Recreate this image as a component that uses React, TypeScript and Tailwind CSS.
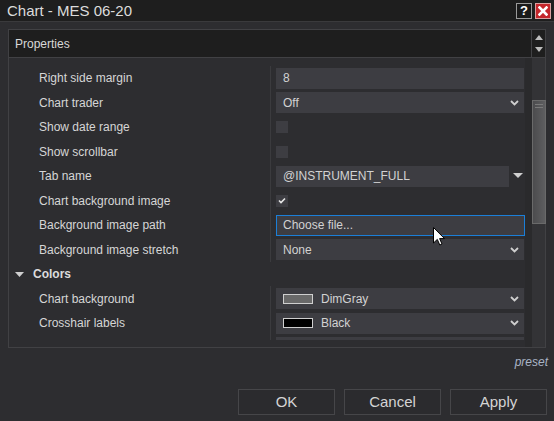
import React from "react";

const Chevron = () => (
  <svg width="9" height="6" viewBox="0 0 9 6" className="shrink-0">
    <polyline points="1,1 4.5,4.5 8,1" fill="none" stroke="#cfcfcf" strokeWidth="1.8" />
  </svg>
);

const Row = ({ label, children }: { label: string; children?: React.ReactNode }) => (
  <div className="h-[24.5px] shrink-0 flex">
    <div className="w-[262px] border-r border-[#3b3b3e] pl-[30px] flex items-center text-[12px] text-[#d6d6d6] whitespace-nowrap">
      {label}
    </div>
    <div className="flex-1 pl-[5px] flex items-center">{children}</div>
  </div>
);

const Box = ({ children, chevron }: { children?: React.ReactNode; chevron?: boolean }) => (
  <div className="w-[248px] h-[21px] bg-[#3d3d42] flex items-center pl-[7px] pr-[5px] text-[12px] text-[#d2d2d2]">
    <div className="flex-1 flex items-center">{children}</div>
    {chevron && <Chevron />}
  </div>
);

const Check = ({ checked }: { checked?: boolean }) => (
  <div className="w-[12px] h-[12px] bg-[#3d3d42] flex items-center justify-center">
    {checked && (
      <svg width="8" height="7" viewBox="0 0 8 7">
        <polyline points="1,3.5 3,5.5 7,1.5" fill="none" stroke="#e6e6e6" strokeWidth="1.6" />
      </svg>
    )}
  </div>
);

const Swatch = ({ color }: { color: string }) => (
  <div className="w-[30px] h-[10px] border border-[#cfcfcf] mr-[8px]" style={{ background: color }} />
);

export default function App() {
  return (
    <div className="w-[554px] h-[421px] bg-[#2d2d30] flex flex-col overflow-hidden font-['Liberation_Sans',Arial,sans-serif] text-[#d4d4d4] relative">
      {/* Title bar */}
      <div className="h-[22px] shrink-0 bg-[#1e1e1e] border-b border-[#3a3a3c] flex items-center pl-[7px] pr-[3px]">
        <span className="flex-1 text-[15px] text-[#dcdcdc] leading-none">Chart - MES 06-20</span>
        <div className="flex gap-[3px] items-center">
          <div className="w-[16px] h-[16px] bg-[#1a1a1a] border border-[#9a9a9a] flex items-center justify-center text-[13px] font-bold text-white leading-none">
            ?
          </div>
          <div className="w-[16px] h-[16px] bg-[#c4262b] border border-[#d8a0a0] flex items-center justify-center">
            <svg width="10" height="10" viewBox="0 0 10 10">
              <path d="M1.5 1.5 L8.5 8.5 M8.5 1.5 L1.5 8.5" stroke="white" strokeWidth="2.6" strokeLinecap="square" />
            </svg>
          </div>
        </div>
      </div>

      {/* Panel */}
      <div className="pl-[8px] pt-[7px] shrink-0">
        <div className="w-[538px] h-[319px] border border-[#414144] flex flex-col">
          {/* Header */}
          <div className="h-[28px] shrink-0 bg-[#1e1e1e] border-b border-[#414144] flex">
            <div className="flex-1 flex items-center pl-[6px] text-[12px] text-[#d8d8d8]">Properties</div>
            <div className="w-[14px] border-l border-[#414144] flex flex-col items-center justify-between py-[5px]">
              <svg width="8" height="5" viewBox="0 0 8 5"><polygon points="0,5 8,5 4,0" fill="#bdbdbd" /></svg>
              <svg width="8" height="5" viewBox="0 0 8 5"><polygon points="0,0 8,0 4,5" fill="#bdbdbd" /></svg>
            </div>
          </div>
          {/* Content */}
          <div className="flex-1 flex min-h-0">
            <div className="flex-1 flex flex-col pt-[5px] pb-[7px]">
              <div className="h-[277px] shrink-0 overflow-hidden flex flex-col pt-[2.75px]">
                <Row label="Right side margin"><Box>8</Box></Row>
                <Row label="Chart trader"><Box chevron>Off</Box></Row>
                <Row label="Show date range"><Check /></Row>
                <Row label="Show scrollbar"><Check /></Row>
                <Row label="Tab name">
                  <div className="w-[233px] h-[21px] bg-[#3d3d42] flex items-center pl-[7px] text-[12px] text-[#d2d2d2]">
                    @INSTRUMENT_FULL
                  </div>
                  <svg width="10" height="6" viewBox="0 0 10 6" className="ml-[4px]">
                    <polygon points="0,0 10,0 5,5" fill="#cfcfcf" />
                  </svg>
                </Row>
                <Row label="Chart background image"><Check checked /></Row>
                <Row label="Background image path">
                  <div className="w-[249px] h-[21px] bg-[#3d3d42] border border-[#1b7fd8] flex items-center pl-[6px] text-[12px] text-[#d2d2d2]">
                    Choose file...
                  </div>
                </Row>
                <Row label="Background image stretch"><Box chevron>None</Box></Row>
                <div className="h-[24.5px] shrink-0 flex items-center pl-[6px]">
                  <svg width="9" height="5" viewBox="0 0 9 5" className="mr-[9px]">
                    <polygon points="0,0 9,0 4.5,5" fill="#cfcfcf" />
                  </svg>
                  <span className="text-[12px] font-bold text-[#dcdcdc]">Colors</span>
                </div>
                <Row label="Chart background"><Box chevron><Swatch color="#696969" />DimGray</Box></Row>
                <Row label="Crosshair labels"><Box chevron><Swatch color="#000000" />Black</Box></Row>
                <Row label=""><Box /></Row>
              </div>
            </div>
            <div className="w-[7px] bg-[#2a2a2c]" />
            <div className="w-[14px] bg-[#333336] relative">
              <div className="absolute left-0 top-[42px] w-[14px] h-[124px] border border-[#6a6a6a] bg-gradient-to-r from-[#4c4c4e] to-[#5e5e60] flex flex-col items-center pt-[3px] gap-[2px]">
                <div className="w-[8px] h-px bg-[#7a7a7a]" />
                <div className="w-[8px] h-px bg-[#7a7a7a]" />
              </div>
            </div>
          </div>
        </div>
      </div>

      {/* preset */}
      <div className="h-[28px] shrink-0 flex items-center justify-end pr-[6px]">
        <span className="italic text-[12px] text-[#a9b4c6]">preset</span>
      </div>

      {/* Buttons */}
      <div className="mt-[13px] shrink-0 flex justify-end gap-[9px] pr-[7px]">
        {["OK", "Cancel", "Apply"].map((t) => (
          <div key={t} className="w-[97px] h-[26px] bg-[#2b2b2e] border border-[#464649] flex items-center justify-center text-[15px] text-[#d4d4d4]">
            {t}
          </div>
        ))}
      </div>

      {/* Mouse cursor */}
      <svg width="12" height="19" viewBox="0 0 12 19" className="absolute left-[433px] top-[227px]">
        <path d="M0.5 0.5 L0.5 16 L4.3 12.4 L6.8 18 L9 17 L6.6 11.6 L11.5 11.6 Z" fill="white" stroke="black" strokeWidth="1" />
      </svg>
    </div>
  );
}
